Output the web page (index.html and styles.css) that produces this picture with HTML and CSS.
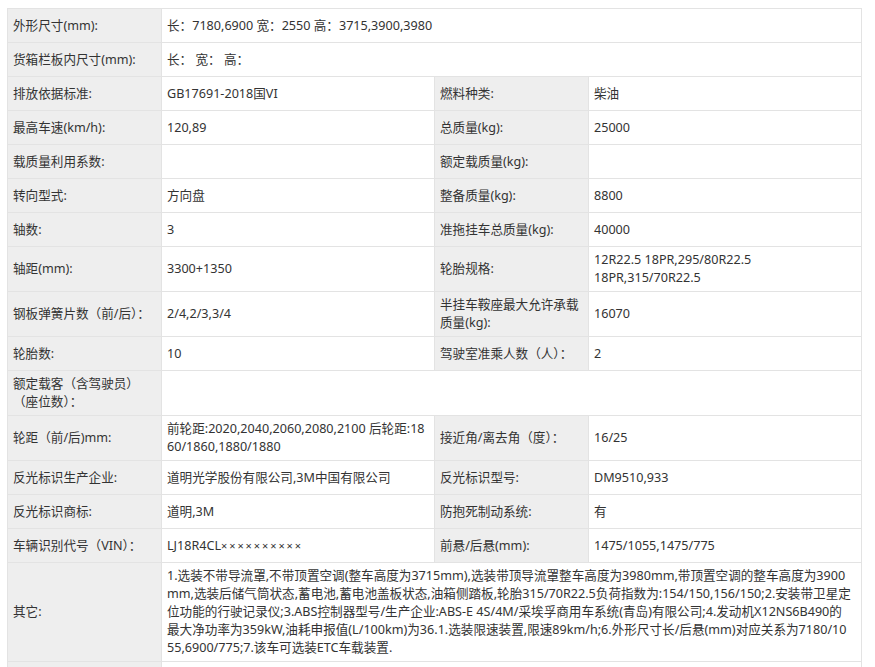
FILE: index.html
```html
<!DOCTYPE html>
<html lang="zh-CN">
<head>
<meta charset="utf-8">
<title>车辆参数</title>
<link rel="stylesheet" href="styles.css">
</head>
<body>
<table class="spec">
  <colgroup>
    <col class="c-label"><col class="c-value"><col class="c-label"><col class="c-value">
  </colgroup>
  <tbody>
    <tr><td class="lb">外形尺寸(mm):</td><td colspan="3">长：7180,6900 宽：2550 高：3715,3900,3980</td></tr>
    <tr><td class="lb">货箱栏板内尺寸(mm):</td><td colspan="3">长：&nbsp;宽：&nbsp;高：</td></tr>
    <tr><td class="lb">排放依据标准:</td><td>GB17691-2018国VI</td><td class="lb">燃料种类:</td><td>柴油</td></tr>
    <tr><td class="lb">最高车速(km/h):</td><td>120,89</td><td class="lb">总质量(kg):</td><td>25000</td></tr>
    <tr><td class="lb">载质量利用系数:</td><td></td><td class="lb">额定载质量(kg):</td><td></td></tr>
    <tr><td class="lb">转向型式:</td><td>方向盘</td><td class="lb">整备质量(kg):</td><td>8800</td></tr>
    <tr><td class="lb">轴数:</td><td>3</td><td class="lb">准拖挂车总质量(kg):</td><td>40000</td></tr>
    <tr><td class="lb">轴距(mm):</td><td>3300+1350</td><td class="lb">轮胎规格:</td><td>12R22.5 18PR,295/80R22.5<br>18PR,315/70R22.5</td></tr>
    <tr><td class="lb">钢板弹簧片数（前/后）：</td><td>2/4,2/3,3/4</td><td class="lb">半挂车鞍座最大允许承载<br>质量(kg):</td><td>16070</td></tr>
    <tr><td class="lb">轮胎数:</td><td>10</td><td class="lb">驾驶室准乘人数（人）：</td><td>2</td></tr>
    <tr><td class="lb">额定载客（含驾驶员）<br>（座位数）：</td><td colspan="3"></td></tr>
    <tr><td class="lb">轮距（前/后)mm:</td><td>前轮距:2020,2040,2060,2080,2100 后轮距:18<br>60/1860,1880/1880</td><td class="lb">接近角/离去角（度）：</td><td>16/25</td></tr>
    <tr><td class="lb">反光标识生产企业:</td><td>道明光学股份有限公司,3M中国有限公司</td><td class="lb">反光标识型号:</td><td>DM9510,933</td></tr>
    <tr><td class="lb">反光标识商标:</td><td>道明,3M</td><td class="lb">防抱死制动系统:</td><td>有</td></tr>
    <tr><td class="lb">车辆识别代号（VIN）：</td><td>LJ18R4CL<span class="mask">××××××××××</span></td><td class="lb">前悬/后悬(mm):</td><td>1475/1055,1475/775</td></tr>
    <tr><td class="lb">其它:</td><td colspan="3">1.选装不带导流罩,不带顶置空调(整车高度为3715mm),选装带顶导流罩整车高度为3980mm,带顶置空调的整车高度为3900<br>mm,选装后储气筒状态,蓄电池,蓄电池盖板状态,油箱侧踏板,轮胎315/70R22.5负荷指数为:154/150,156/150;2.安装带卫星定<br>位功能的行驶记录仪;3.ABS控制器型号/生产企业:ABS-E 4S/4M/采埃孚商用车系统(青岛)有限公司;4.发动机X12NS6B490的<br>最大净功率为359kW,油耗申报值(L/100km)为36.1.选装限速装置,限速89km/h;6.外形尺寸长/后悬(mm)对应关系为7180/10<br>55,6900/775;7.该车可选装ETC车载装置.</td></tr>
    <tr><td class="lb">&nbsp;</td><td colspan="3">&nbsp;</td></tr>
  </tbody>
</table>
</body>
</html>
```

FILE: styles.css
```css
html, body {
  margin: 0;
  padding: 0;
  background: #fff;
}

body {
  padding: 8px 0 0 7px;
  font-family: "Noto Sans", "Noto Sans CJK SC", sans-serif;
  font-size: 12.6px;
  line-height: 18px;
  color: #333;
}

.spec {
  table-layout: fixed;
  border-collapse: separate;
  border-spacing: 0;
  width: 855px;
  border-top: 1px solid #e3e3e3;
  border-left: 1px solid #e3e3e3;
}

.c-label { width: 154px; }
.c-value { width: 273px; }

.spec tr { height: 34px; }

.spec td {
  box-sizing: border-box;
  padding: 4px 5px;
  border-right: 1px solid #e3e3e3;
  border-bottom: 1px solid #e3e3e3;
  vertical-align: middle;
  white-space: nowrap;
  background: #fff;
}

.spec td.lb {
  background: #eeeeee;
}

.mask {
  font-size: 11px;
  letter-spacing: 1.9px;
}
```
